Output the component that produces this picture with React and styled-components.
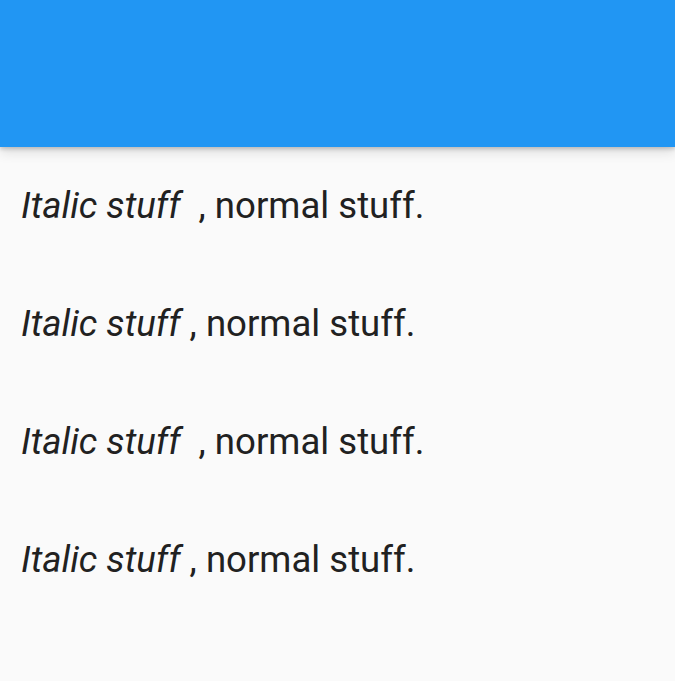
import styled, { createGlobalStyle } from "styled-components";

const Global = createGlobalStyle`
  html, body {
    margin: 0;
    padding: 0;
    background: #fafafa;
  }
  body {
    font-family: Roboto, "Noto Sans", sans-serif;
  }
`;

const Page = styled.div`
  width: 675px;
  height: 681px;
  background: #fafafa;
  overflow: hidden;
`;

const AppBar = styled.header`
  height: 147px;
  background: #2196f3;
  box-shadow: 0 2px 4px rgba(0, 0, 0, 0.18), 0 5px 12px rgba(0, 0, 0, 0.12);
  position: relative;
  z-index: 1;
`;

const List = styled.div`
  display: flex;
  flex-direction: column;
  gap: 76px;
  padding: 38px 21px 0;
`;

const Line = styled.p`
  margin: 0;
  font-size: 36.6px;
  line-height: 42px;
  color: #212121;
  white-space: pre;
`;

const Em = styled.span`
  font-style: italic;
`;

const rows = [
  { italic: "Italic stuff ", rest: " , normal stuff." },
  { italic: "Italic stuff", rest: " , normal stuff." },
  { italic: "Italic stuff ", rest: " , normal stuff." },
  { italic: "Italic stuff", rest: " , normal stuff." },
];

const App = () => {
  return (
    <Page>
      <Global />
      <AppBar />
      <List>
        {rows.map((r, i) => (
          <Line key={i}>
            <Em>{r.italic}</Em>
            {r.rest}
          </Line>
        ))}
      </List>
    </Page>
  );
};

export default App;
